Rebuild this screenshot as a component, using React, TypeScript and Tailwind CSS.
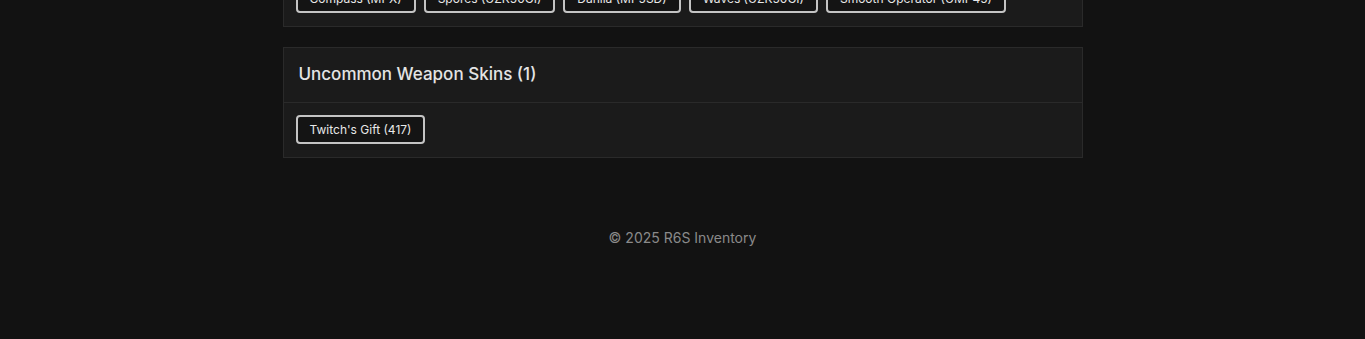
import React from 'react'

interface SkinGroup {
  title: string
  skins: string[]
}

const groups: SkinGroup[] = [
  {
    title: 'Rare Weapon Skins (5)',
    skins: ['Compass (MPX)', 'Spores (UZK50GI)', 'Dahlia (MP5SD)', 'Waves (UZK50GI)', 'Smooth Operator (UMP45)'],
  },
  {
    title: 'Uncommon Weapon Skins (1)',
    skins: ["Twitch's Gift (417)"],
  },
]

function SkinCard({ group }: { group: SkinGroup }) {
  return (
    <section className="border border-[#2a2a2a] bg-[#1b1b1b]">
      <div className="h-[55px] px-[15px] flex items-center border-b border-[#2a2a2a]">
        <h2 className="text-[17px] font-medium text-[#e4e4e4]">{group.title}</h2>
      </div>
      <div className="px-3 pt-[12px] pb-[13px] flex flex-wrap gap-2">
        {group.skins.map((skin) => (
          <span
            key={skin}
            className="h-[29px] px-[12px] flex items-center rounded-[4px] border-2 border-[#c4c4c4] bg-[#141414] text-[12px] text-[#e8e8e8]"
          >
            {skin}
          </span>
        ))}
      </div>
    </section>
  )
}

export default function App() {
  return (
    <div className="min-h-[339px] bg-[#121212] overflow-hidden font-['Inter','Noto_Sans',sans-serif]">
      <main className="w-[800px] mx-auto -mt-[84px] flex flex-col gap-5">
        {groups.map((g) => (
          <SkinCard key={g.title} group={g} />
        ))}
      </main>
      <footer className="pt-[69px] pb-[80px] text-center text-[14px] text-[#8a8a8a]">
        © 2025 R6S Inventory
      </footer>
    </div>
  )
}
